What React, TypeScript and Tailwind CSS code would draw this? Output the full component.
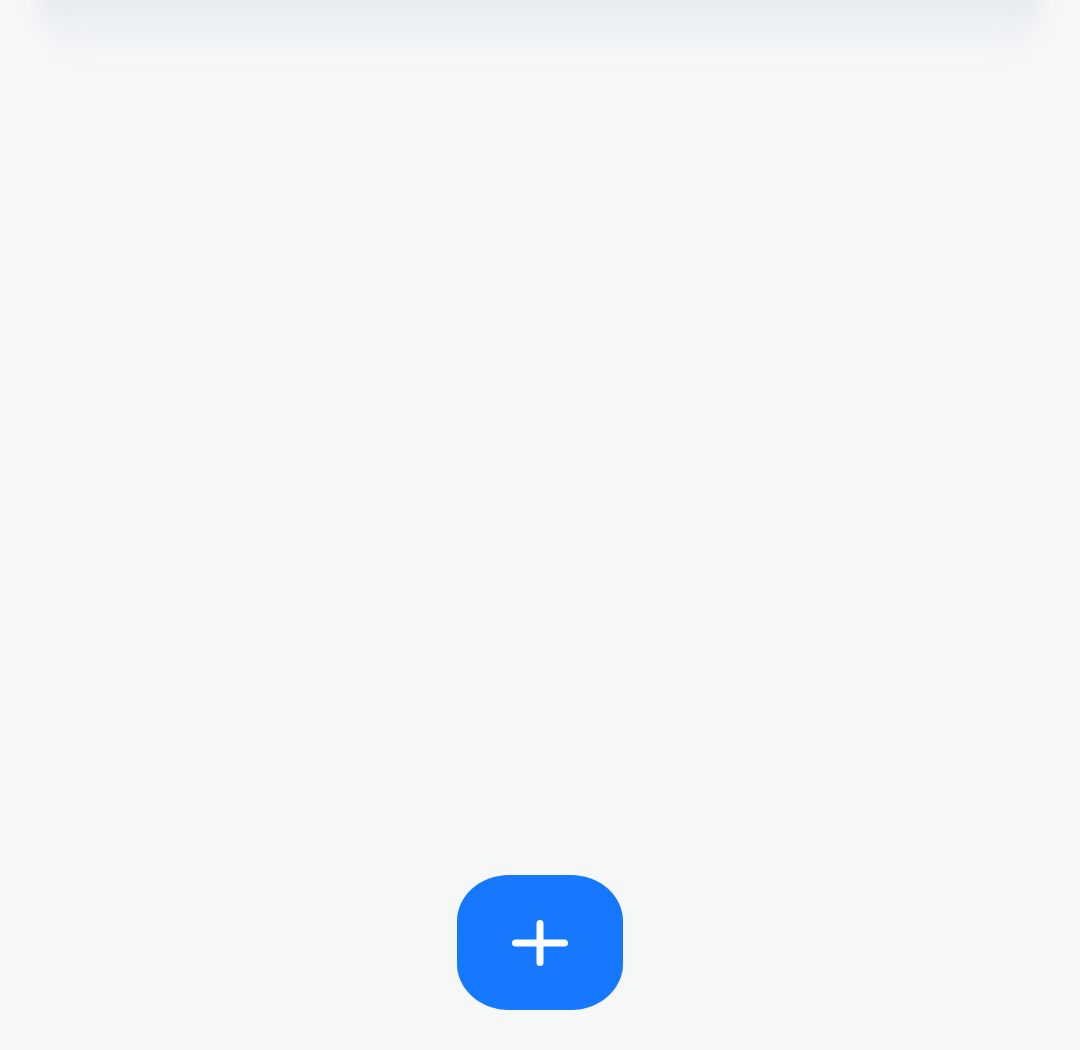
export default function App() {
  return (
    <div className="h-[1050px] w-full bg-[#f6f7f7] flex flex-col overflow-hidden" style={{ fontFamily: "Roboto, sans-serif" }}>
      {/* blurred header shadow at the top */}
      <div className="relative h-[70px] shrink-0">
        <div className="absolute left-[40px] right-[40px] -top-[20px] h-[72px] rounded-b-[40px] bg-gradient-to-b from-[#e2e6e8] via-[#ebeef3] to-[#f3f5f7] blur-[10px]" />
      </div>
      <div className="flex-1" />
      <div className="flex justify-center pb-[40px]">
        <button className="w-[166px] h-[135px] rounded-[52px/46px] bg-[#1677ff] flex items-center justify-center" aria-label="Add">
          <svg width="56" height="46" viewBox="0 0 56 46" fill="none" stroke="#fff" strokeWidth="7" strokeLinecap="round" className="shrink-0">
            <path d="M3.5 23H52.5" />
            <path d="M28 3.5V42.5" />
          </svg>
        </button>
      </div>
    </div>
  );
}
